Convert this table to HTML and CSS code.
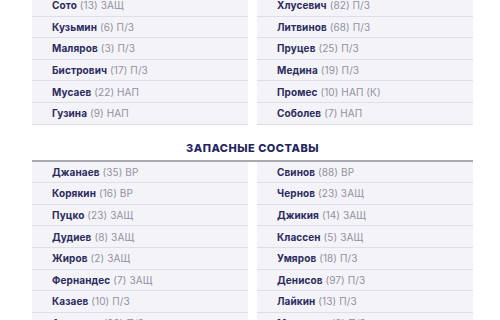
FILE: index.html
```html
<!DOCTYPE html>
<html lang="ru">
<head>
<meta charset="utf-8">
<link rel="stylesheet" href="styles.css">
</head>
<body>
<div class="page">
  <div class="lineup lineup-main">
    <ul class="team">
      <li class="row"><b>Сото</b> (13) ЗАЩ</li>
      <li class="row"><b>Кузьмин</b> (6) П/З</li>
      <li class="row"><b>Маляров</b> (3) П/З</li>
      <li class="row"><b>Бистрович</b> (17) П/З</li>
      <li class="row"><b>Мусаев</b> (22) НАП</li>
      <li class="row"><b>Гузина</b> (9) НАП</li>
    </ul>
    <ul class="team">
      <li class="row"><b>Хлусевич</b> (82) П/З</li>
      <li class="row"><b>Литвинов</b> (68) П/З</li>
      <li class="row"><b>Пруцев</b> (25) П/З</li>
      <li class="row"><b>Медина</b> (19) П/З</li>
      <li class="row"><b>Промес</b> (10) НАП (К)</li>
      <li class="row"><b>Соболев</b> (7) НАП</li>
    </ul>
  </div>
  <h2 class="section-title">Запасные составы</h2>
  <div class="lineup lineup-subs">
    <ul class="team">
      <li class="row"><b>Джанаев</b> (35) ВР</li>
      <li class="row"><b>Корякин</b> (16) ВР</li>
      <li class="row"><b>Пуцко</b> (23) ЗАЩ</li>
      <li class="row"><b>Дудиев</b> (8) ЗАЩ</li>
      <li class="row"><b>Жиров</b> (2) ЗАЩ</li>
      <li class="row"><b>Фернандес</b> (7) ЗАЩ</li>
      <li class="row"><b>Казаев</b> (10) П/З</li>
      <li class="row"><b>Агаларов</b> (99) П/З</li>
    </ul>
    <ul class="team">
      <li class="row"><b>Свинов</b> (88) ВР</li>
      <li class="row"><b>Чернов</b> (23) ЗАЩ</li>
      <li class="row"><b>Джикия</b> (14) ЗАЩ</li>
      <li class="row"><b>Классен</b> (5) ЗАЩ</li>
      <li class="row"><b>Умяров</b> (18) П/З</li>
      <li class="row"><b>Денисов</b> (97) П/З</li>
      <li class="row"><b>Лайкин</b> (13) П/З</li>
      <li class="row"><b>Мелкадзе</b> (9) П/З</li>
    </ul>
  </div>
</div>
</body>
</html>
```

FILE: styles.css
```css
html, body {
  margin: 0;
  padding: 0;
  background: #ffffff;
  overflow: hidden;
}
body {
  font-family: "Inter", "Noto Sans", sans-serif;
  font-size: 10px;
  color: #9290a0;
}
.page {
  width: 441px;
  margin-left: 32px;
}
.lineup {
  display: grid;
  grid-template-columns: 216px 216px;
  column-gap: 9px;
}
.lineup-main {
  margin-top: -5px;
}
.lineup-subs {
  border-top: 2px solid #a9a9b1;
}
.team {
  list-style: none;
  margin: 0;
  padding: 0;
}
.row {
  height: 20.6px;
  box-sizing: content-box;
  display: flex;
  align-items: center;
  padding-left: 20px;
  background: #f4f4f8;
  border-bottom: 1px solid #dedee6;
  white-space: pre;
  letter-spacing: 0.1px;
}
.row b {
  font-weight: 700;
  color: #2c2b5e;
}
.section-title {
  margin: 0;
  padding: 16px 0 5px;
  text-align: center;
  text-transform: uppercase;
  font-size: 11px;
  line-height: 14px;
  font-weight: 800;
  color: #25255f;
  letter-spacing: 0.5px;
}
```
